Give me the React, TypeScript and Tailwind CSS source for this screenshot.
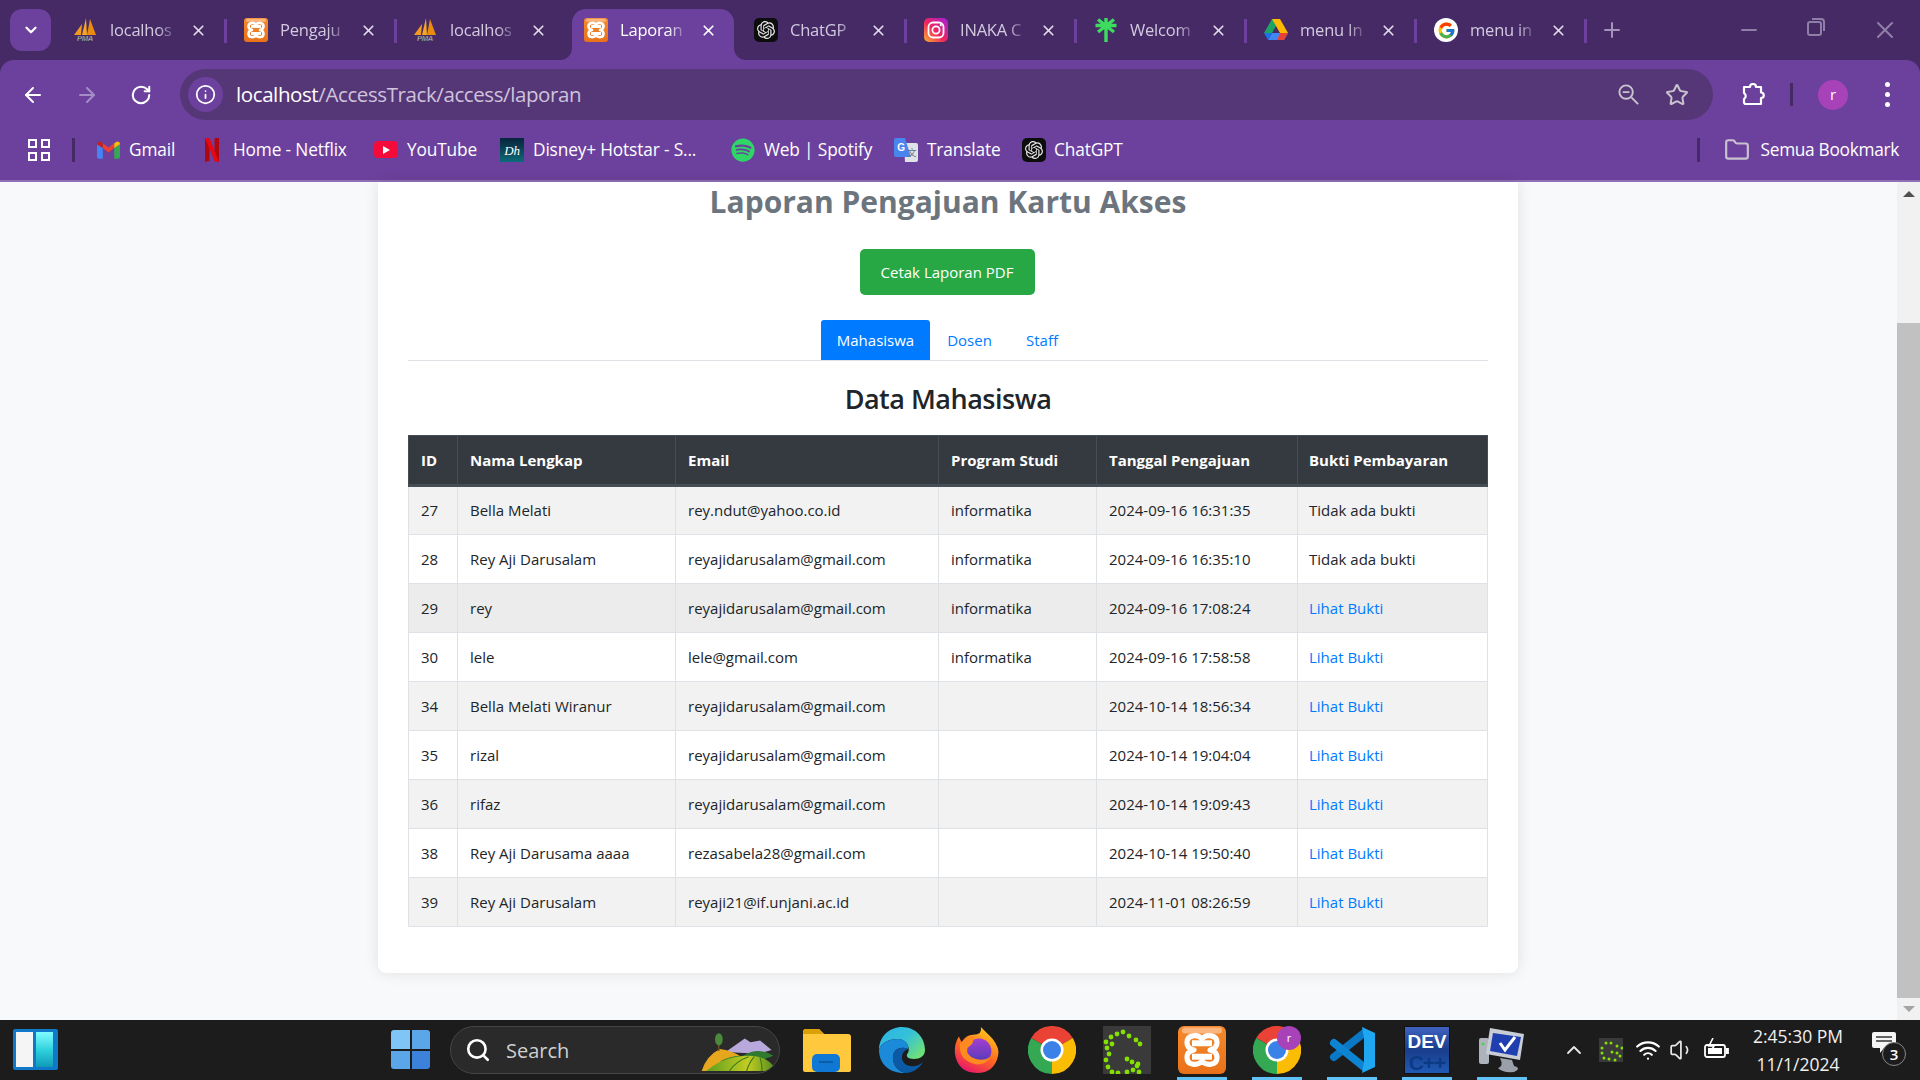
import React from 'react';
import { SiOpenai } from 'react-icons/si';
import { FaSpotify } from 'react-icons/fa';
import { FcGoogle } from 'react-icons/fc';
import { ArrowLeft, ArrowRight, RotateCw, Info, Star, Folder, Plus, Minus, X, ChevronDown, ChevronUp, Search, Volume1, Wifi } from 'lucide-react';

const Pma = () => (
  <svg viewBox="0 0 24 24" className="w-6 h-6 shrink-0 -ml-[1px] mr-[1px]">
    <path d="M1 17 L9 6 L8 17Z" fill="#f29a1f" />
    <path d="M9 17 L13 0 L14 17Z" fill="#f6a623" />
    <path d="M14 17 L17 1 L23 17Z" fill="#e98b13" />
    <text x="12" y="23" textAnchor="middle" fontSize="7.5" fontWeight="700" fontStyle="italic" fill="#cfd4dc" stroke="#333" strokeWidth="0.3" fontFamily="Liberation Sans">PMA</text>
  </svg>
);

const Xampp = ({ id, cls = 'w-6 h-6' }: { id: string; cls?: string }) => (
  <svg viewBox="0 0 24 24" className={`${cls} shrink-0`}>
    <defs>
      <linearGradient id={id} x1="0" y1="0" x2="0" y2="1">
        <stop offset="0" stopColor="#f58a2c" />
        <stop offset="1" stopColor="#e9711a" />
      </linearGradient>
    </defs>
    <rect width="24" height="24" rx="3" fill={`url(#${id})`} />
    <rect x="2" y="0.8" width="20" height="3" rx="1.5" fill="#f9b67e" />
    <path d="M12 6.5 C10 4 4.5 4.2 4.5 8.3 C4.5 10.4 6 11.6 8 12 C6 12.4 4.5 13.6 4.5 15.7 C4.5 19.8 10 20 12 17.5 C14 20 19.5 19.8 19.5 15.7 C19.5 13.6 18 12.4 16 12 C18 11.6 19.5 10.4 19.5 8.3 C19.5 4.2 14 4 12 6.5Z" fill="none" stroke="#fff" strokeWidth="2.6" strokeLinejoin="round" />
    <path d="M7 8.6 H17 M7 15.4 H17" stroke="#fff" strokeWidth="3" />
  </svg>
);

const Gpt = () => (
  <span className="w-6 h-6 shrink-0 rounded-[5px] bg-[#0d0d0d] flex items-center justify-center">
    <SiOpenai size={18} color="#e8e8e8" />
  </span>
);

const Insta = () => (
  <svg viewBox="0 0 24 24" className="w-6 h-6 shrink-0">
    <defs>
      <linearGradient id="ig" x1="0" y1="1" x2="1" y2="0">
        <stop offset="0" stopColor="#fdb42d" />
        <stop offset="0.45" stopColor="#f0265c" />
        <stop offset="1" stopColor="#a11ee0" />
      </linearGradient>
    </defs>
    <rect width="24" height="24" rx="5" fill="url(#ig)" />
    <rect x="4.5" y="4.5" width="15" height="15" rx="4.5" fill="none" stroke="#fff" strokeWidth="1.8" />
    <circle cx="12" cy="12" r="3.6" fill="none" stroke="#fff" strokeWidth="1.8" />
    <circle cx="16.8" cy="7.2" r="1.1" fill="#fff" />
  </svg>
);

const Linktree = () => (
  <svg viewBox="0 0 24 24" className="w-6 h-6 shrink-0" stroke="#3ddc5f" strokeWidth="3.4" fill="none">
    <path d="M12 0 V24 M1.5 7.5 H22.5 M4 1.5 L20 14 M20 1.5 L4 14" />
  </svg>
);

const Drive = () => (
  <svg viewBox="0 0 24 22" className="w-6 h-[22px] shrink-0">
    <path d="M8 0 H16 L8 14 H0Z" fill="#1ea362" />
    <path d="M8 0 H16 L24 14 H16Z" fill="#ffba00" />
    <path d="M4 21 L8 14 H24 L20 21Z" fill="#4285f4" />
    <path d="M0 14 H8 L4 21Z" fill="#1a73e8" />
    <path d="M16 14 H24 L20 21 H13Z" fill="#ea4335" />
  </svg>
);

const GoogleG = () => (
  <span className="w-6 h-6 shrink-0 rounded-full bg-white flex items-center justify-center">
    <FcGoogle size={19} />
  </span>
);

const Gmail = () => (
  <svg viewBox="0 0 24 18" className="w-[23px] h-[18px] shrink-0">
    <path d="M0 3 L6 7 V18 H2 Q0 18 0 16Z" fill="#4285f4" />
    <path d="M24 3 L18 7 V18 H22 Q24 18 24 16Z" fill="#34a853" />
    <path d="M6 7 L12 11.5 L18 7 V2 L12 6.5 L6 2Z" fill="#ea4335" />
    <path d="M0 3 Q0 0 3 0 L6 2 V7Z" fill="#c5221f" />
    <path d="M24 3 Q24 0 21 0 L18 2 V7Z" fill="#fbbc04" />
  </svg>
);

const Netflix = () => (
  <svg viewBox="0 0 14 24" className="w-[14px] h-6 shrink-0">
    <path d="M0 0 H4.5 V23 L0 24Z" fill="#b1060f" />
    <path d="M9.5 0 H14 V24 L9.5 23Z" fill="#b1060f" />
    <path d="M0 0 H4.5 L14 24 L9.5 23Z" fill="#e50914" />
  </svg>
);

const Youtube = () => (
  <span className="w-6 h-[17px] shrink-0 rounded-[4px] bg-[#f50b3a] flex items-center justify-center">
    <span className="w-0 h-0 border-y-[4px] border-y-transparent border-l-[7px] border-l-white" />
  </span>
);

const Hotstar = () => (
  <span className="w-6 h-6 shrink-0 bg-gradient-to-b from-[#07243c] to-[#0d6a78] flex items-center justify-center text-[13px] leading-none text-white font-['Liberation_Serif',serif] italic">
    Dh
  </span>
);

const Translate = () => (
  <svg viewBox="0 0 24 24" className="w-6 h-6 shrink-0">
    <path d="M10 5 H22 Q24 5 24 7 V22 Q24 24 22 24 H11Z" fill="#dfe3e8" />
    <path d="M2 0 H11 L17 19 H2 Q0 19 0 17 V2 Q0 0 2 0Z" fill="#4a85ee" />
    <text x="7" y="13" textAnchor="middle" fontSize="10" fontWeight="700" fill="#fff" fontFamily="Liberation Sans">G</text>
    <text x="18" y="18" textAnchor="middle" fontSize="9" fill="#6b7280" fontFamily="Noto Sans CJK SC, sans-serif">文</text>
  </svg>
);

const Puzzle = () => (
  <svg viewBox="0 0 24 24" className="w-[24px] h-[24px]" fill="none" stroke="#fff" strokeWidth="2.2" strokeLinejoin="round">
    <path d="M3 4 H9 A3 3 0 0 1 15 4 H20 V9.5 A2.6 2.6 0 0 1 20 15 V21 H5 Q3 21 3 19 V16 A3.5 3.5 0 0 0 3 10Z" />
  </svg>
);

const ZoomOut = () => (
  <svg viewBox="0 0 24 24" className="w-[23px] h-[23px]" fill="none" stroke="#c9c3cf" strokeWidth="2">
    <circle cx="9.5" cy="9.5" r="7" />
    <path d="M6 9.5 H13 M15 15 L22 22" />
  </svg>
);

const Apps = () => (
  <svg viewBox="0 0 22 22" className="w-[22px] h-[22px] shrink-0" fill="none" stroke="#fff" strokeWidth="2">
    <rect x="1" y="1" width="7" height="7" />
    <rect x="14" y="1" width="7" height="7" />
    <rect x="1" y="14" width="7" height="7" />
    <rect x="14" y="14" width="7" height="7" />
  </svg>
);

const tabs = [
  { icon: <Pma />, label: 'localhos' },
  { icon: <Xampp id="xa" />, label: 'Pengaju' },
  { icon: <Pma />, label: 'localhos' },
  { icon: <Xampp id="xb" />, label: 'Laporan', active: true },
  { icon: <Gpt />, label: 'ChatGP' },
  { icon: <Insta />, label: 'INAKA C' },
  { icon: <Linktree />, label: 'Welcom' },
  { icon: <Drive />, label: 'menu In' },
  { icon: <GoogleG />, label: 'menu in' },
];

const bookmarks = [
  { icon: <Gmail />, label: 'Gmail', w: 'w-[108px]', gap: 'gap-[9px]' },
  { icon: <Netflix />, label: 'Home - Netflix', w: 'w-[169px]', gap: 'gap-[14px]' },
  { icon: <Youtube />, label: 'YouTube', w: 'w-[126px]', gap: 'gap-[9px]' },
  { icon: <Hotstar />, label: 'Disney+ Hotstar - S...', w: 'w-[231px]', gap: 'gap-[9px]' },
  { icon: <span className="w-6 h-6 shrink-0 flex items-center justify-center"><FaSpotify size={24} color="#2fd566" /></span>, label: 'Web | Spotify', w: 'w-[163px]', gap: 'gap-[9px]' },
  { icon: <Translate />, label: 'Translate', w: 'w-[128px]', gap: 'gap-[9px]' },
  { icon: <Gpt />, label: 'ChatGPT', w: 'w-[110px]', gap: 'gap-[8px]' },
];

const rows = [
  ['27', 'Bella Melati', 'rey.ndut@yahoo.co.id', 'informatika', '2024-09-16 16:31:35', ''],
  ['28', 'Rey Aji Darusalam', 'reyajidarusalam@gmail.com', 'informatika', '2024-09-16 16:35:10', ''],
  ['29', 'rey', 'reyajidarusalam@gmail.com', 'informatika', '2024-09-16 17:08:24', 'x'],
  ['30', 'lele', 'lele@gmail.com', 'informatika', '2024-09-16 17:58:58', 'x'],
  ['34', 'Bella Melati Wiranur', 'reyajidarusalam@gmail.com', '', '2024-10-14 18:56:34', 'x'],
  ['35', 'rizal', 'reyajidarusalam@gmail.com', '', '2024-10-14 19:04:04', 'x'],
  ['36', 'rifaz', 'reyajidarusalam@gmail.com', '', '2024-10-14 19:09:43', 'x'],
  ['38', 'Rey Aji Darusama aaaa', 'rezasabela28@gmail.com', '', '2024-10-14 19:50:40', 'x'],
  ['39', 'Rey Aji Darusalam', 'reyaji21@if.unjani.ac.id', '', '2024-11-01 08:26:59', 'x'],
];

const headers = ['ID', 'Nama Lengkap', 'Email', 'Program Studi', 'Tanggal Pengajuan', 'Bukti Pembayaran'];

const Chrome = () => (
  <svg viewBox="0 0 48 48" className="w-12 h-12">
    <path d="M24 24 L3.2 12 A24 24 0 0 1 44.8 12Z" fill="#ea4335" />
    <path d="M24 24 L44.8 12 A24 24 0 0 1 24 48Z" fill="#fbbc04" />
    <path d="M24 24 L24 48 A24 24 0 0 1 3.2 12Z" fill="#34a853" />
    <circle cx="24" cy="24" r="11.5" fill="#fff" />
    <circle cx="24" cy="24" r="9" fill="#3b82e8" />
  </svg>
);

const TaskIcon = ({ children, active }: { children: React.ReactNode; active?: boolean }) => (
  <div className="relative w-[48px] h-[60px] flex items-center justify-center shrink-0">
    {children}
    {active && <span className="absolute bottom-0 -left-px -right-px h-[3px] bg-[#60c3f7]" />}
  </div>
);

const App = () => {
  return (
    <div className="h-screen w-[1920px] flex flex-col overflow-hidden bg-[#452a66] font-['Open_Sans',sans-serif]">
      {/* tab strip */}
      <div className="h-[60px] flex shrink-0 text-[16.5px] tracking-[-0.2px]">
        <div className="w-[41px] h-[42px] ml-[10px] mt-[9px] mr-[5px] rounded-[12px] bg-[#6c419d] flex items-center justify-center shrink-0">
          <ChevronDown size={18} color="#fff" strokeWidth={3} />
        </div>
        {tabs.map((t, i) => (
          <div key={i} className="relative w-[170px] h-[51px] mt-[9px] shrink-0">
            {t.active && (
              <div className="absolute left-[6px] right-[2px] top-0 bottom-0 bg-[#6c419d] rounded-t-[14px]">
                <span className="absolute -left-[12px] bottom-0 w-3 h-3 bg-[#6c419d]"><span className="block w-3 h-3 bg-[#452a66] rounded-br-[12px]" /></span>
                <span className="absolute -right-[12px] bottom-0 w-3 h-3 bg-[#6c419d]"><span className="block w-3 h-3 bg-[#452a66] rounded-bl-[12px]" /></span>
              </div>
            )}
            <div className={`relative w-[170px] h-[51px] flex items-center pl-[18px] pb-[9px] ${t.active ? 'text-white' : 'text-[#d3cadf]'}`}>
              {t.icon}
              <span className="ml-[12px] w-[68px] whitespace-nowrap [mask-image:linear-gradient(to_right,black_70%,transparent)]">{t.label}</span>
              <X size={17} strokeWidth={2.4} color={t.active ? '#fff' : '#e2dcea'} className="ml-[12px]" />
            </div>
            {i !== 2 && i !== 3 && <span className="absolute -right-[1px] top-[10px] w-[3px] h-[24px] bg-[#6c419d]" />}
          </div>
        ))}
        <Plus size={24} color="#a593bb" className="ml-[14px] mt-[18px] shrink-0" />
        <Minus size={24} color="#8f7ea6" className="ml-[113px] mt-[18px] shrink-0" />
        <div className="ml-[46px] mt-[21px] relative w-[15px] h-[15px] border-2 border-[#8f7ea6] rounded-[3px] shrink-0">
          <span className="absolute -top-[5px] -right-[5px] w-[13px] h-[13px] border-t-2 border-r-2 border-[#8f7ea6] rounded-tr-[4px]" />
        </div>
        <X size={28} color="#8f7ea6" strokeWidth={1.8} className="ml-[49px] mt-[16px] shrink-0" />
      </div>

      {/* toolbar + bookmarks */}
      <div className="bg-[#6c419d] rounded-t-[14px] shrink-0">
        <div className="h-[60px] flex items-start pt-[9px]">
          <div className="flex items-center h-[51px] shrink-0">
            <ArrowLeft size={24} color="#fff" strokeWidth={2} className="ml-[21px]" />
            <ArrowRight size={24} color="#a48dc4" strokeWidth={2} className="ml-[30px]" />
            <RotateCw size={22} color="#fff" strokeWidth={2.2} className="ml-[31px]" />
          </div>
          <div className="ml-[28px] w-[1533px] h-[51px] rounded-full bg-[#553777] flex items-center shrink-0">
            <div className="ml-[8px] w-[35px] h-[35px] rounded-full bg-[#6c419d] flex items-center justify-center">
              <Info size={21} color="#fff" strokeWidth={2} />
            </div>
            <span className="ml-[13px] text-[20.5px] tracking-[-0.4px] text-white whitespace-nowrap">localhost<span className="text-[#cfc3dd]">/AccessTrack/access/laporan</span></span>
            <div className="ml-auto flex items-center">
              <ZoomOut />
              <Star size={24} color="#c9c3cf" strokeWidth={2} className="ml-[25px] mr-[24px]" />
            </div>
          </div>
          <div className="flex items-center h-[51px] ml-[28px]">
            <Puzzle />
            <span className="ml-[25px] w-[3px] h-[23px] bg-[#452a66]" />
            <span className="ml-[25px] w-[30px] h-[30px] rounded-full bg-[#a742b8] text-white text-[15px] flex items-center justify-center">r</span>
            <span className="ml-[37px] flex flex-col gap-[5px]">
              <span className="w-[5px] h-[5px] rounded-full bg-white" />
              <span className="w-[5px] h-[5px] rounded-full bg-white" />
              <span className="w-[5px] h-[5px] rounded-full bg-white" />
            </span>
          </div>
        </div>
        <div className="h-[60px] flex items-center text-white text-[17.3px] tracking-[-0.15px] leading-none">
          <div className="ml-[28px]"><Apps /></div>
          <span className="ml-[22px] mr-[22px] w-[3px] h-[24px] bg-[#452a66] shrink-0" />
          {bookmarks.map((b, i) => (
            <div key={i} className={`flex items-center whitespace-nowrap shrink-0 ${b.w} ${b.gap}`}>
              {b.icon}
              <span>{b.label}</span>
            </div>
          ))}
          <span className="ml-auto w-[3px] h-[24px] bg-[#452a66] shrink-0" />
          <Folder size={26} color="#c9c3cf" strokeWidth={2} className="ml-[24px]" />
          <span className="ml-[11px] mr-[21px] whitespace-nowrap tracking-[-0.3px]">Semua Bookmark</span>
        </div>
        <div className="h-[2px] bg-[#9070b5]" />
      </div>

      {/* page */}
      <div className="flex-1 flex min-h-0 bg-[#f8f9fa]">
        <div className="flex-1 flex justify-center pr-[1px]">
          <div className="w-[1140px] h-[791px] px-[30px] bg-white rounded-b-[8px] shadow-[0_0_15px_rgba(0,0,0,0.1)] flex flex-col items-center">
            <h1 className="h-[44px] leading-[40px] text-[30px] font-bold text-[#6c757d] whitespace-nowrap">Laporan Pengajuan Kartu Akses</h1>
            <button className="mt-[23px] mr-[2px] w-[175px] h-[46px] rounded-[5px] bg-[#28a745] text-white text-[15px]">Cetak Laporan PDF</button>
            <div className="mt-[25px] w-full flex justify-center border-b border-[#dee2e6] h-[41px] text-[15px]">
              <span className="w-[109px] h-[40px] bg-[#007bff] text-white rounded-t-[3px] flex items-center justify-center">Mahasiswa</span>
              <span className="w-[79px] h-[40px] text-[#007bff] flex items-center justify-center">Dosen</span>
              <span className="w-[66px] h-[40px] text-[#007bff] flex items-center justify-center">Staff</span>
            </div>
            <h2 className="mt-[19px] h-[38px] leading-[38px] text-[27px] tracking-[-0.5px] font-semibold text-[#212529] whitespace-nowrap">Data Mahasiswa</h2>
            <div className="mt-[17px] w-full">
              <table className="w-[1079px] table-fixed border-collapse text-[15px] text-[#212529]">
                <colgroup>
                  <col className="w-[49px]" />
                  <col className="w-[218px]" />
                  <col className="w-[263px]" />
                  <col className="w-[158px]" />
                  <col className="w-[201px]" />
                  <col className="w-[190px]" />
                </colgroup>
                <thead>
                  <tr className="h-[50px] bg-[#343a40] text-white">
                    {headers.map((h, j) => (
                      <th key={h} className={`pr-3 text-left font-bold border border-[#454d55] border-b-[3px] whitespace-nowrap ${j === 5 ? 'pl-[11px]' : 'pl-3'}`}>{h}</th>
                    ))}
                  </tr>
                </thead>
                <tbody>
                  {rows.map((r, i) => (
                    <tr key={r[0]} className={`h-[49px] ${r[0] === '29' ? 'bg-[#ececec]' : i % 2 === 0 ? 'bg-[#f2f2f2]' : 'bg-white'}`}>
                      {r.map((c, j) => (
                        <td key={j} className={`pr-3 border border-[#dee2e6] whitespace-nowrap ${j === 5 ? 'pl-[11px]' : 'pl-3'}`}>
                          {j === 5 ? (c ? <span className="text-[#007bff]">Lihat Bukti</span> : 'Tidak ada bukti') : c}
                        </td>
                      ))}
                    </tr>
                  ))}
                </tbody>
              </table>
            </div>
          </div>
        </div>
        {/* scrollbar */}
        <div className="w-[23px] bg-[#f1f1f1] flex flex-col items-center shrink-0">
          <div className="h-[23px] flex items-center justify-center shrink-0">
            <span className="w-0 h-0 border-x-[6px] border-x-transparent border-b-[6px] border-b-[#505050]" />
          </div>
          <div className="w-full mt-[118px] flex-1 bg-[#c1c1c1]" />
          <div className="h-[22px] flex items-center justify-center shrink-0">
            <span className="w-0 h-0 border-x-[6px] border-x-transparent border-t-[6px] border-t-[#a3a3a3]" />
          </div>
        </div>
      </div>

      {/* taskbar */}
      <div className="h-[60px] bg-[#1c1c1c] flex shrink-0 text-white">
        <div className="ml-[13px] mt-[9px] w-[45px] h-[41px] rounded-[2px] bg-[#0f78c8] flex gap-[3px] p-[3px] shrink-0">
          <span className="w-[17px] bg-[#f5f5f5]" />
          <span className="w-[17px] bg-gradient-to-b from-[#7dfcff] via-[#2fd3de] to-[#0f9ab8]" />
        </div>
        <div className="ml-[333px] mt-[10px] w-[39px] h-[39px] grid grid-cols-2 gap-[2px] shrink-0">
          <span className="bg-[#7fc5f5] rounded-tl-[3px]" />
          <span className="bg-[#5aa6e8] rounded-tr-[3px]" />
          <span className="bg-[#5aa6e8] rounded-bl-[3px]" />
          <span className="bg-[#3c82db] rounded-br-[3px]" />
        </div>
        <div className="ml-[20px] mt-[6px] w-[330px] h-[48px] rounded-full bg-[#2a2a2a] border border-[#454545] flex items-center shrink-0 overflow-hidden">
          <Search size={26} color="#fff" strokeWidth={2.4} className="ml-[14px]" />
          <span className="ml-[15px] pt-[2px] text-[20px] text-[#d0d0d0]">Search</span>
          <svg viewBox="0 0 80 48" className="ml-auto w-[80px] h-[46px]">
            <defs>
              <linearGradient id="hill" x1="0" y1="0" x2="1" y2="0">
                <stop offset="0" stopColor="#5f9e1f" />
                <stop offset="0.6" stopColor="#c2cc22" />
                <stop offset="1" stopColor="#4f8a1f" />
              </linearGradient>
            </defs>
            <path d="M26 26 L46 12 L52 16 L62 14 L74 24 L60 28Z" fill="#b9a8dc" />
            <path d="M1 46 Q6 30 20 23 Q32 24 44 32 L30 46Z" fill="#e6a71e" />
            <path d="M20 36 Q30 30 44 30 Q60 20 76 30 L60 36Z" fill="#2f7a2f" />
            <path d="M6 46 Q24 30 50 30 Q70 30 78 44 L76 46Z" fill="url(#hill)" />
            <path d="M30 46 Q36 36 50 31 M48 46 Q50 38 56 31 M64 46 Q64 38 62 32" stroke="#3f7a1a" strokeWidth="1.2" fill="none" />
            <rect x="18" y="16" width="1.6" height="9" fill="#6b4a22" />
            <ellipse cx="19" cy="13" rx="4" ry="6.5" fill="#4b8a3a" />
          </svg>
        </div>
        <div className="ml-[23px] flex gap-[27px] shrink-0">
          <TaskIcon>
            <svg viewBox="0 0 48 48" className="w-12 h-12">
              <path d="M0 6 Q0 3 3 3 H16 L21 8 H45 Q48 8 48 11 V44 Q48 46 46 46 H2 Q0 46 0 44Z" fill="#ffc83d" />
              <path d="M0 8 Q0 3 3 3 H16 L21 8 Z" fill="#d9a106" />
              <rect x="9" y="28" width="28" height="18" rx="5" fill="#0f78d4" />
              <rect x="16" y="35" width="14" height="2" fill="#0a5ea8" />
            </svg>
          </TaskIcon>
          <TaskIcon>
            <svg viewBox="0 0 48 48" className="w-12 h-12">
              <defs>
                <linearGradient id="edge2" x1="0" y1="0" x2="1" y2="0.7">
                  <stop offset="0" stopColor="#2bb3e6" />
                  <stop offset="0.55" stopColor="#35c1d8" />
                  <stop offset="1" stopColor="#6ee07a" />
                </linearGradient>
              </defs>
              <path d="M1 24 C1 10 12 1 24 1 C38 1 47 12 47 24 C47 30 42 33 36 33 C30 33 27 30 30 27 C32 24 31 14 20 13 C10 13 3 17 1 24Z" fill="url(#edge2)" />
              <path d="M1 24 C3 17 10 13 20 13 C27 13 31 18 30 23 C24 20 16 22 15 30 C14 38 20 46 28 47 C12 48 1 38 1 24Z" fill="#1b8ad8" />
              <path d="M15 30 C16 22 24 20 30 23 C24 25 22 32 26 37 C31 42 40 41 45 36 C41 43 34 47 28 47 C20 46 14 38 15 30Z" fill="#0c5aa6" />
            </svg>
          </TaskIcon>
          <TaskIcon>
            <svg viewBox="0 0 48 48" className="w-[46px] h-12">
              <defs>
                <linearGradient id="ff" x1="0.8" y1="0" x2="0.3" y2="1">
                  <stop offset="0" stopColor="#ffd21f" />
                  <stop offset="0.55" stopColor="#ff6a1f" />
                  <stop offset="1" stopColor="#e8176b" />
                </linearGradient>
                <linearGradient id="ffp" x1="0.5" y1="0" x2="0.5" y2="1">
                  <stop offset="0" stopColor="#a43fd0" />
                  <stop offset="1" stopColor="#4f3bb8" />
                </linearGradient>
              </defs>
              <path d="M28 0 Q34 6 40 12 Q48 22 46 30 Q42 48 24 48 Q4 48 1 28 Q0 18 5 10 L8 16 Q12 8 20 8 Q30 8 28 0Z" fill="url(#ff)" />
              <circle cx="26" cy="25" r="13" fill="url(#ffp)" />
              <path d="M6 18 Q5 36 24 39 Q34 39 38 31 Q32 36 22 33 Q12 30 14 22 Q22 17 20 10 Q10 12 6 18Z" fill="#ff8a1f" />
            </svg>
          </TaskIcon>
          <TaskIcon><Chrome /></TaskIcon>
          <TaskIcon>
            <svg viewBox="0 0 48 48" className="w-12 h-12">
              <rect width="48" height="48" fill="#3a3a3a" />
              {[[3,16],[8,11],[14,8],[20,6],[26,10],[33,14],[37,18],[4,22],[9,18],[6,28],[3,34],[5,41],[9,46],[15,47],[24,46],[30,44],[36,46],[35,38],[29,36],[24,33],[34,40]].map(([cx, cy], i) => (
                <circle key={i} cx={cx} cy={cy} r="2.4" fill="#84e000" />
              ))}
            </svg>
          </TaskIcon>
          <TaskIcon active><Xampp id="xc" cls="w-12 h-12" /></TaskIcon>
          <TaskIcon active>
            <Chrome />
            <span className="absolute top-[6px] right-0 w-[24px] h-[24px] rounded-full bg-[#a742b8] text-[11px] flex items-center justify-center">r</span>
          </TaskIcon>
          <TaskIcon active>
            <svg viewBox="0 0 48 48" className="w-12 h-12">
              <path d="M36 7 L6 31" stroke="#0a78c4" strokeWidth="8" strokeLinecap="round" />
              <path d="M6 17 L36 41" stroke="#0d84d1" strokeWidth="8" strokeLinecap="round" />
              <path d="M34 1 L47 7 V41 L34 47 L36 36 V12Z" fill="#1fa8f1" />
            </svg>
          </TaskIcon>
          <TaskIcon active>
            <div className="w-[46px] h-[48px] bg-gradient-to-b from-[#3f62c0] via-[#1a3d8c] to-[#1f5bb5] border border-[#111] flex flex-col items-center leading-none font-['Liberation_Sans',sans-serif] font-bold">
              <span className="text-[19px] mt-[5px]">DEV</span>
              <span className="text-[21px] tracking-[-1px] text-[#0d3a85] mt-[1px]">C++</span>
            </div>
          </TaskIcon>
          <TaskIcon active>
            <svg viewBox="0 0 48 48" className="w-12 h-12">
              <rect x="1" y="12" width="10" height="26" rx="2" fill="#aeb3bb" />
              <circle cx="5" cy="18" r="1.5" fill="#4fd05a" />
              <path d="M12 2 L46 8 L42 34 L8 28Z" fill="#c8ccd4" />
              <path d="M15 7 L43 11 L39 30 L12 25Z" fill="#1f3fb0" />
              <path d="M22 17 L27 24 L37 11" fill="none" stroke="#fff" strokeWidth="3" />
              <path d="M22 32 L34 34 L36 40 Q44 42 36 46 Q24 47 20 42 Q26 40 22 32Z" fill="#9aa0aa" />
            </svg>
          </TaskIcon>
        </div>
        <div className="flex items-center ml-[36px] h-[60px] shrink-0">
          <ChevronUp size={24} color="#e8e8e8" strokeWidth={1.8} />
          <svg viewBox="0 0 24 24" className="ml-[13px] w-6 h-6">
            <rect width="24" height="24" fill="#3a3a3a" />
            {[[3,10],[3,15],[5,20],[10,21],[16,22],[21,18],[18,15],[13,14],[7,5],[12,5],[18,8],[23,10]].map(([cx, cy], i) => (
              <circle key={i} cx={cx} cy={cy} r="1.5" fill="#84e000" />
            ))}
          </svg>
          <Wifi size={26} color="#fff" strokeWidth={2} className="ml-[12px]" />
          <Volume1 size={26} color="#e8e8e8" strokeWidth={1.6} className="ml-[8px]" />
          <svg viewBox="0 0 26 24" className="ml-[9px] w-[26px] h-[24px]" fill="none" stroke="#fff" strokeWidth="1.8">
            <rect x="1" y="7" width="20" height="12" rx="2" />
            <rect x="4" y="10" width="14" height="6" fill="#fff" stroke="none" />
            <path d="M22 11 H24 V15 H22" fill="#fff" />
            <path d="M9 0 L5 8 H10 L7 13" strokeWidth="1.6" />
          </svg>
          <div className="ml-[18px] w-[100px] flex flex-col items-center text-[17.5px] leading-[28px] whitespace-nowrap text-[#f0f0f0]">
            <span>2:45:30 PM</span>
            <span>11/1/2024</span>
          </div>
          <div className="relative ml-[24px] w-[36px] h-[36px]">
            <svg viewBox="0 0 24 24" className="w-[24px] h-[24px]">
              <path d="M2 0 H22 Q24 0 24 2 V14 Q24 16 22 16 H12 L8 21 V16 H2 Q0 16 0 14 V2 Q0 0 2 0Z" fill="#f5f5f5" />
              <path d="M4 5 H20 M4 9 H20" stroke="#333" strokeWidth="1.4" />
            </svg>
            <span className="absolute left-[10px] top-[10px] w-[24px] h-[24px] rounded-full bg-[#1c1c1c] border border-[#888] text-[15px] font-semibold flex items-center justify-center">3</span>
          </div>
        </div>
      </div>
    </div>
  );
};

export default App;
